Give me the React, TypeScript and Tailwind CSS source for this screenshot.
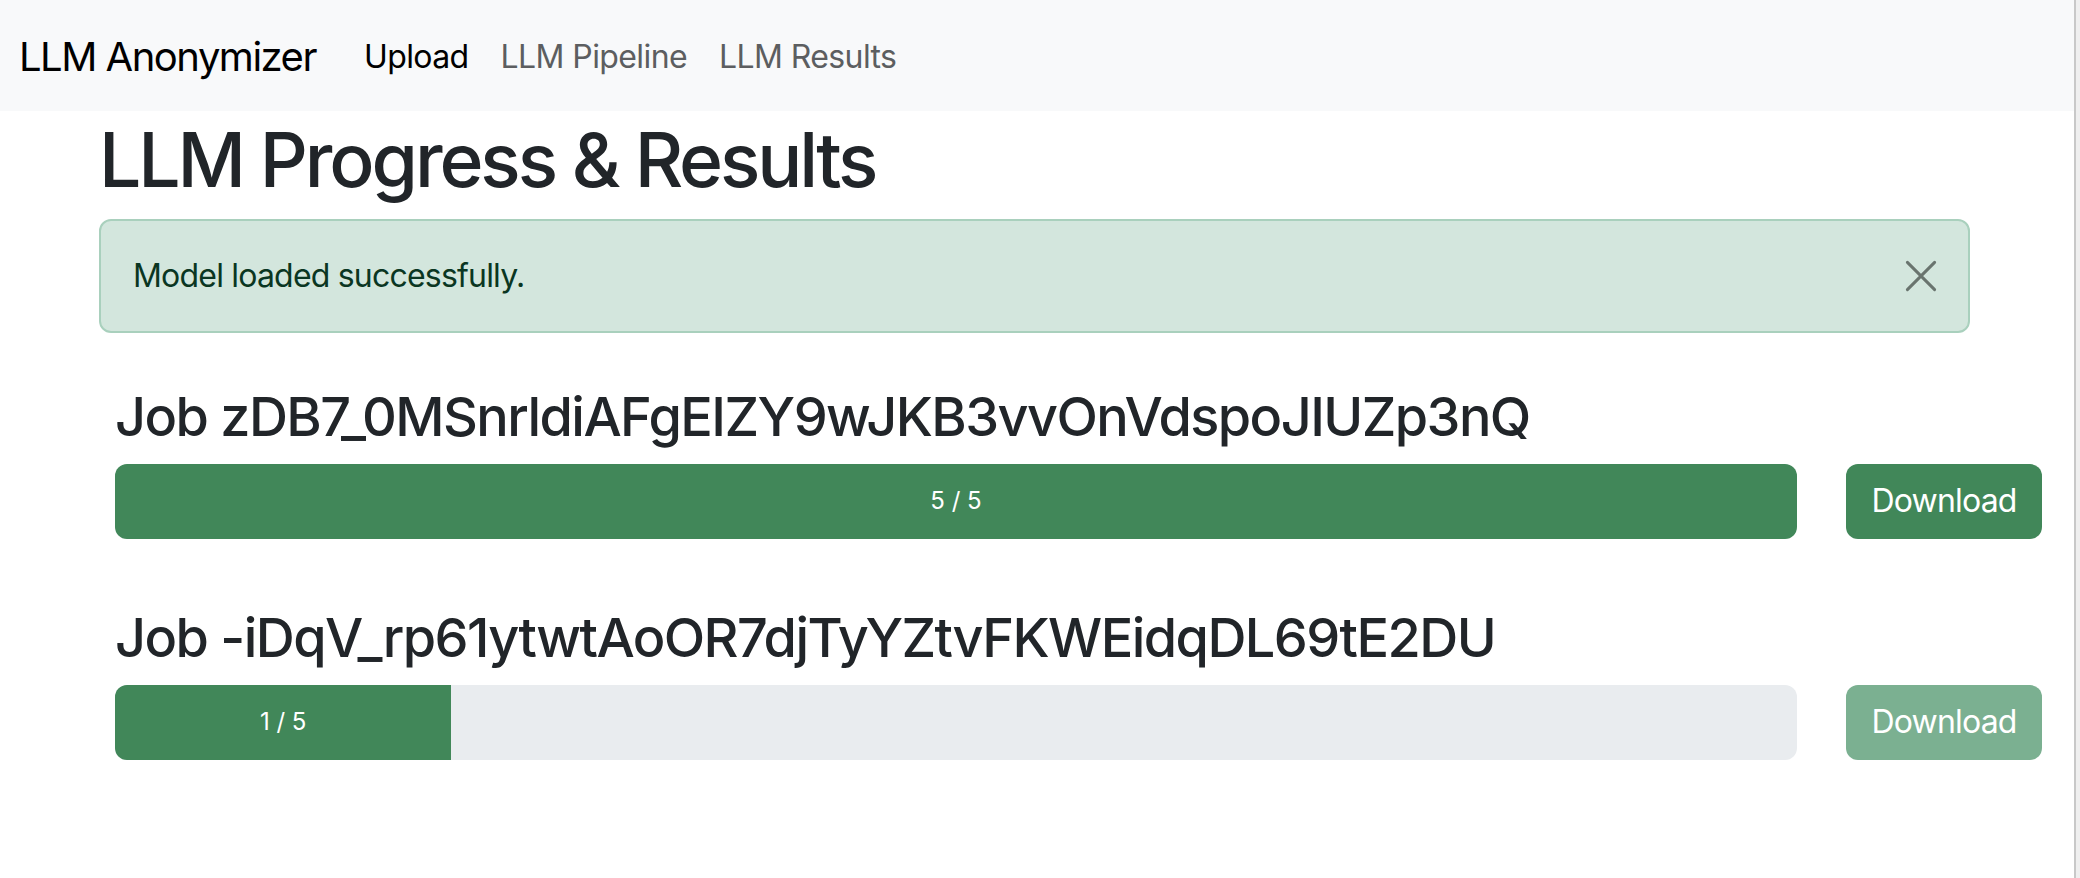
import React from "react";

const jobs = [
  { id: "zDB7_0MSnrldiAFgEIZY9wJKB3vvOnVdspoJIUZp3nQ", done: 5, total: 5 },
  { id: "-iDqV_rp61ytwtAoOR7djTyYZtvFKWEidqDL69tE2DU", done: 1, total: 5 },
];

function CloseIcon() {
  return (
    <svg width="32" height="32" viewBox="0 0 16 16" fill="none" aria-hidden="true">
      <path d="M1.2 1.2 L14.8 14.8 M14.8 1.2 L1.2 14.8" stroke="#69746e" strokeWidth="1.5" strokeLinecap="round" />
    </svg>
  );
}

export default function App() {
  return (
    <div className="flex h-[878px] w-full overflow-hidden bg-white font-[Inter,'Noto_Sans',sans-serif]">
      <div className="flex min-w-0 flex-1 flex-col">
        <nav className="flex h-[111px] items-center bg-[#f8f9fa] pl-[19px] pt-[2px]">
          <span className="mr-[32px] text-[40px] leading-[60px] tracking-[-1.5px] text-black">LLM Anonymizer</span>
          <a className="px-[16px] text-[32px] leading-[48px] tracking-[-0.6px] text-black">Upload</a>
          <a className="px-[16px] text-[32px] leading-[48px] tracking-[-0.6px] text-[#5c5e60]">LLM Pipeline</a>
          <a className="px-[16px] text-[32px] leading-[48px] tracking-[-0.6px] text-[#5c5e60]">LLM Results</a>
        </nav>

        <main className="pl-[99px]">
          <h1 className="mt-[4px] mb-[14px] text-[75px] font-medium leading-[1.2] tracking-[-3.1px] text-[#212529]">
            LLM Progress &amp; Results
          </h1>

          <div className="flex w-[1871px] items-center justify-between rounded-[12px] border-2 border-[#a9d0bd] bg-[#d3e6dd] py-[31px] pl-[32px] pr-[31px] text-[32px] leading-[48px] tracking-[-0.8px] text-[#0a3622]">
            <span>Model loaded successfully.</span>
            <CloseIcon />
          </div>

          <div className="mt-[52px] flex flex-col gap-[67px] pl-[16px]">
            {jobs.map((job) => {
              const pct = (job.done / job.total) * 100;
              const complete = job.done === job.total;
              return (
                <section key={job.id}>
                  <h3 className="mb-[14px] text-[54px] font-medium leading-[1.2] tracking-[-1.55px] text-[#212529]">
                    Job {job.id}
                  </h3>
                  <div className="flex w-[1927px] items-center gap-[49px]">
                    <div className="flex h-[75px] flex-1 overflow-hidden rounded-[12px] bg-[#e9ecef]">
                      <div
                        className="flex h-full items-center justify-center bg-[#418759] text-[24px] text-white"
                        style={{ width: `${pct}%` }}
                      >
                        {job.done} / {job.total}
                      </div>
                    </div>
                    <button
                      className={
                        complete
                          ? "flex h-[75px] w-[196px] shrink-0 items-center justify-center rounded-[12px] bg-[#418759] text-[32px] tracking-[-0.8px] text-white"
                          : "flex h-[75px] w-[196px] shrink-0 items-center justify-center rounded-[12px] bg-[#7bb091] text-[32px] tracking-[-0.8px] text-white"
                      }
                    >
                      Download
                    </button>
                  </div>
                </section>
              );
            })}
          </div>
        </main>
      </div>
      <div className="h-full w-[6px] shrink-0 border-l-2 border-[#c8c8c8] bg-[#efefef]" />
    </div>
  );
}
